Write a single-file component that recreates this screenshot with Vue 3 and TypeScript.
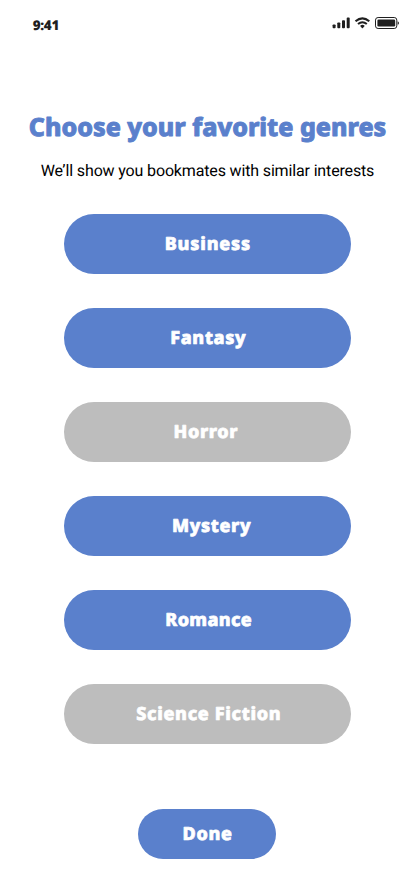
<script setup lang="ts">
import { ref } from 'vue'

interface Genre {
  name: string
  width: number
  shift: number
  selected: boolean
}

const genres = ref<Genre[]>([
  { name: 'Business', width: 85.5, shift: -0.3, selected: true },
  { name: 'Fantasy', width: 75.5, shift: 0.2, selected: true },
  { name: 'Horror', width: 64, shift: -2.5, selected: false },
  { name: 'Mystery', width: 78.5, shift: 3, selected: true },
  { name: 'Romance', width: 86.5, shift: 0.3, selected: true },
  { name: 'Science Fiction', width: 144.5, shift: 0.2, selected: false },
])
</script>

<template>
  <main class="screen">
    <header class="status">
      <svg class="time" width="27" height="14"><text x="0.8" y="11" textLength="26.5">9:41</text></svg>
      <svg class="indicators" width="68" height="14" viewBox="0 0 68 14">
        <g fill="#1f1f1f">
          <rect x="0.6" y="8.4" width="3" height="3.8" rx="0.9" />
          <rect x="5.3" y="6.4" width="3" height="5.8" rx="0.9" />
          <rect x="10" y="4.2" width="3" height="8" rx="0.9" />
          <rect x="14.7" y="1.6" width="3" height="10.6" rx="0.9" />
          <path d="M28.5 9.4 Q30.4 8.2 32.3 9.4 L32.6 10 L30.9 12 Q30.4 12.4 29.9 12 L28.2 10Z" />
          <rect x="45.4" y="3.4" width="17.8" height="7.2" rx="1.3" />
          <path d="M65.7 5.2 C67.4 5.6 67.4 8.4 65.7 8.8Z" />
        </g>
        <g fill="none" stroke="#1f1f1f">
          <path d="M23.5 5.2 Q30.4 -0.5 37.3 5.2" stroke-width="2.1" />
          <path d="M26 8 Q30.4 4.4 34.8 8" stroke-width="2" />
          <rect x="43.5" y="1.5" width="21.3" height="11" rx="2.6" />
        </g>
      </svg>
    </header>

    <svg class="title" role="heading" width="358" height="36"><text x="0.8" y="25" textLength="357.5">Choose your favorite genres</text></svg>
    <p class="subtitle">We’ll show you bookmates with similar interests</p>

    <section class="genres">
      <button
        v-for="genre in genres"
        :key="genre.name"
        class="pill"
        :class="{ muted: !genre.selected }"
        @click="genre.selected = !genre.selected"
      >
        <svg class="label" :width="genre.width" height="24"><text :x="genre.shift" y="18" :textLength="genre.width">{{ genre.name }}</text></svg>
      </button>
    </section>

    <button class="pill done">
      <svg class="label" width="50" height="24"><text x="0.5" y="17.8" textLength="49.5">Done</text></svg>
    </button>
  </main>
</template>

<style scoped>
.screen {
  box-sizing: border-box;
  width: 414px;
  height: 896px;
  background: #fff;
  display: flex;
  flex-direction: column;
  align-items: center;
  overflow: hidden;
}
svg {
  display: block;
  overflow: visible;
  flex: none;
}
text {
  font-family: 'Noto Sans', 'Open Sans', sans-serif;
  font-weight: 800;
  stroke-linejoin: round;
  text-rendering: geometricPrecision;
}
.status {
  box-sizing: border-box;
  width: 100%;
  height: 46px;
  padding: 16px 14px 0 32px;
  display: flex;
  justify-content: space-between;
}
.time {
  margin-top: 3px;
}
.time text {
  font-size: 13.5px;
  font-weight: 900;
  fill: #1f1f1f;
}
.title {
  margin-top: 65px;
}
.title text {
  font-size: 25px;
  fill: #5a80cc;
  stroke: #5a80cc;
  stroke-width: 0.9px;
}
.subtitle {
  margin: 13px 0 0;
  padding-left: 1px;
  font: 16px/22px Roboto, sans-serif;
  letter-spacing: -0.15px;
  text-rendering: geometricPrecision;
  color: #000;
  white-space: nowrap;
}
.genres {
  margin-top: 32px;
  display: flex;
  flex-direction: column;
  gap: 34px;
}
.pill {
  box-sizing: border-box;
  width: 287px;
  height: 60px;
  padding: 0 0 0 2px;
  border: 0;
  border-radius: 30px;
  background: #5a80cc;
  display: flex;
  align-items: center;
  justify-content: center;
  cursor: pointer;
}
.muted {
  background: #bdbdbd;
}
.label text {
  font-size: 18px;
  fill: #fff;
  stroke: #fff;
  stroke-width: 0.7px;
}
.done {
  flex: none;
  width: 138px;
  height: 50px;
  margin-top: 65px;
  border-radius: 25px;
  padding: 0;
}
</style>
